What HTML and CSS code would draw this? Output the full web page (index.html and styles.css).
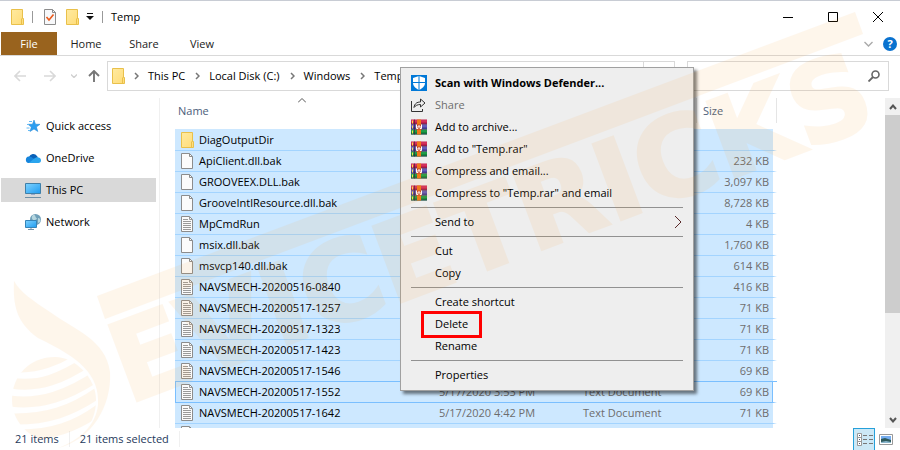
FILE: index.html
```
<!DOCTYPE html>
<html lang="en">
<head>
    <meta charset="UTF-8">
    <meta name="viewport" content="width=device-width, initial-scale=1.0">
    <title>Temp</title>
    <link rel="stylesheet" href="styles.css">
</head>
<body>

    <!-- Icons -->
    <svg class="defs" aria-hidden="true">
        <defs>
            <linearGradient id="folder-fill" x1="0" y1="0" x2="1" y2="1">
                <stop offset="0" stop-color="#ffeaa0"/>
                <stop offset="1" stop-color="#ffdc78"/>
            </linearGradient>
            <linearGradient id="screen-fill" x1="0" y1="0" x2="1" y2="1">
                <stop offset="0" stop-color="#7fd3ff"/>
                <stop offset="1" stop-color="#1e9bf0"/>
            </linearGradient>
        </defs>
        <symbol id="folder" viewBox="0 0 13 16">
            <path d="M.5.5h11v9h1v6H.5z" fill="url(#folder-fill)" stroke="#e9c04a"/>
            <path d="M10.5 15V10l1-1" fill="none" stroke="#e9c04a"/>
        </symbol>
        <symbol id="file" viewBox="0 0 12 16">
            <path d="M.5.5h8l3 3v12H.5z" fill="#fbfbfb" stroke="#8c8c8c"/>
            <path d="M8.5.5v3h3" fill="none" stroke="#8c8c8c"/>
        </symbol>
        <symbol id="text" viewBox="0 0 12 16">
            <path d="M.5.5h8l3 3v12H.5z" fill="#fbfbfb" stroke="#8c8c8c"/>
            <path d="M8.5.5v3h3M2 3.5h5M2 5.5h8M2 7.5h8M2 9.5h8M2 11.5h8M2 13.5h8" fill="none" stroke="#9a9a9a"/>
        </symbol>
        <symbol id="check" viewBox="0 0 12 16">
            <path d="M.5.5h8l3 3v12H.5z" fill="#f7f8fa" stroke="#8c8c8c"/>
            <path d="M8.5.5v3h3" fill="none" stroke="#8c8c8c"/>
            <path d="M2.5 8l2.5 3 4.500-5.500" fill="none" stroke="#ea5a1c" stroke-width="1.600"/>
        </symbol>
        <symbol id="chevron" viewBox="0 0 5 8">
            <path d="M1 1l3 3-3 3" fill="none" stroke="#777" stroke-width="1.500"/>
        </symbol>
        <symbol id="rar" viewBox="0 0 16 15">
            <path d="M0 0h16v5H0z" fill="#c41e4c"/>
            <path d="M0 1h16v1H0z" fill="#e0426a"/>
            <path d="M0 5h16v5H0z" fill="#4f46a8"/>
            <path d="M0 6h16v1H0z" fill="#7a70c8"/>
            <path d="M0 10h16v5H0z" fill="#128a3a"/>
            <path d="M0 11h16v1H0z" fill="#2fae57"/>
            <path d="M0 4.500h16M0 9.500h16M0 14.500h16" stroke="#33285a" stroke-width=".7"/>
            <path d="M1 1h1v3H1zM1 6h1v3H1zM1 11h1v3H1z" fill="#ffe14a"/>
            <path d="M3.500 0v15" stroke="#40203c" stroke-width=".7"/>
            <path d="M6 0h4v15H6z" fill="#f07818"/>
            <path d="M5 5h6v5H5z" fill="#c4442a"/>
            <path d="M5.500 5v4H7V6.500h2V9h1.500V5" fill="none" stroke="#fff"/>
        </symbol>
    </svg>

    <div class="window">
        <header class="titlebar">
            <svg class="folder"><use href="#folder"/></svg>
            <span class="divider"></span>
            <svg class="file"><use href="#check"/></svg>
            <svg class="folder"><use href="#folder"/></svg>
            <svg class="customize" viewBox="0 0 8 8"><path d="M1 .5h6" stroke="#111"/><path d="M0 3h8L4 7z" fill="#111"/></svg>
            <span class="divider"></span>
            <h1>Temp</h1>
            <div class="controls">
                <button aria-label="Minimize"><svg viewBox="0 0 10 10"><path d="M0 5.500h10" stroke="#000"/></svg></button>
                <button aria-label="Maximize"><svg viewBox="0 0 10 10"><path d="M.5.5h9v9h-9z" fill="none" stroke="#000"/></svg></button>
                <button aria-label="Close"><svg viewBox="0 0 10 10"><path d="M0 0l10 10M10 0L0 10" stroke="#000"/></svg></button>
            </div>
        </header>

        <nav class="tabs">
            <button class="active">File</button>
            <button>Home</button>
            <button>Share</button>
            <button>View</button>
            <div class="help">
                <svg class="expand" viewBox="0 0 9 6"><path d="M.5 1l4 4 4-4" fill="none" stroke="#aaa" stroke-width="1.400"/></svg>
                <button aria-label="Help">?</button>
            </div>
        </nav>

        <div class="toolbar">
            <div class="arrows">
                <svg class="arrow" viewBox="0 0 12 12"><path d="M12 6H1M6 1L1 6l5 5" fill="none" stroke="#d9d9d9" stroke-width="1.600"/></svg>
                <svg class="arrow" viewBox="0 0 12 12"><path d="M0 6h11M6 1l5 5-5 5" fill="none" stroke="#d9d9d9" stroke-width="1.600"/></svg>
                <svg class="recent" viewBox="0 0 6 4"><path d="M0 .5l3 3 3-3" fill="none" stroke="#d0d0d0" stroke-width="1.400"/></svg>
                <svg class="arrow" viewBox="0 0 12 12"><path d="M6 12V1M1 6l5-5 5 5" fill="none" stroke="#777" stroke-width="1.900"/></svg>
            </div>
            <div class="address">
                <svg class="folder"><use href="#folder"/></svg>
                <svg class="chevron"><use href="#chevron"/></svg>
                <a href="#">This PC</a>
                <svg class="chevron"><use href="#chevron"/></svg>
                <a href="#">Local Disk (C:)</a>
                <svg class="chevron"><use href="#chevron"/></svg>
                <a href="#">Windows</a>
                <svg class="chevron"><use href="#chevron"/></svg>
                <a href="#">Temp</a>
                <span class="refresh"></span>
            </div>
            <div class="search">
                <input type="text" aria-label="Search Temp">
                <svg viewBox="0 0 12 12"><circle cx="7.500" cy="4.500" r="3.500" fill="none" stroke="#666" stroke-width="1.600"/><path d="M5 7L.5 11.500" stroke="#666" stroke-width="1.800"/></svg>
            </div>
        </div>

        <main>
            <aside>
                <a href="#">
                    <svg viewBox="0 0 16 16"><path d="M9 2l1.500 4.200 4.500.1-3.600 2.700 1.400 4.500L9 11l-4 2.500 1.300-4.400L3 6.300l4.500-.1z" fill="#2b9df0" stroke="#1a82d2" stroke-width=".5"/><path d="M4 3.500h3M2 6.500h2M1.500 10h3M3 12.500h2" stroke="#66baf3"/></svg>
                    Quick access
                </a>
                <a href="#">
                    <svg viewBox="0 0 16 16"><path d="M4 7a4.500 4.500 0 0 1 8-1l1 1.500L5 11z" fill="#0a61b8"/><path d="M3.500 13a3.300 3.300 0 0 1 .2-6.500c2-.3 3 .9 4.500 1.800L14 12z" fill="#1685dc"/><path d="M4 13l4.500-4 3-1.800c2.500-.3 4.500 1 4.500 3A2.800 2.800 0 0 1 13 13z" fill="#2aa5ee"/></svg>
                    OneDrive
                </a>
                <a href="#" class="selected">
                    <svg viewBox="0 0 16 16"><path d="M.5 1.500h15v10H.5z" fill="url(#screen-fill)" stroke="#3f7fa8"/><path d="M6 12h4v1H6z" fill="#9ac"/><path d="M0 15.500h16" stroke="#6f8fa5"/></svg>
                    This PC
                </a>
                <a href="#">
                    <svg viewBox="0 0 16 16"><circle cx="10.500" cy="5.500" r="5.500" fill="#6f9fb9"/><path d="M8 1c3-.5 2 2 3.500 3S9 7 8 6s-2-3 0-5zM13 4c2 0 3 2 2 4l-2 1z" fill="#b5d6df"/><path d="M.5 6.500h11v7H.5z" fill="url(#screen-fill)" stroke="#3584b8"/><path d="M3 15.500h6M6 14v1" stroke="#7795aa"/></svg>
                    Network
                </a>
            </aside>

            <section class="files">
                <svg class="sort" viewBox="0 0 8 5"><path d="M0 4.500l4-4 4 4" fill="none" stroke="#555"/></svg>
                <table>
                    <thead>
                        <tr><th class="name">Name</th><th class="date"></th><th class="type"></th><th class="size">Size</th></tr>
                    </thead>
                    <tbody>
                        <tr><td><svg class="folder"><use href="#folder"/></svg>DiagOutputDir</td><td></td><td></td><td></td></tr>
                        <tr><td><svg class="file"><use href="#file"/></svg>ApiClient.dll.bak</td><td></td><td></td><td>232 KB</td></tr>
                        <tr><td><svg class="file"><use href="#file"/></svg>GROOVEEX.DLL.bak</td><td></td><td></td><td>3,097 KB</td></tr>
                        <tr><td><svg class="file"><use href="#file"/></svg>GrooveIntlResource.dll.bak</td><td></td><td></td><td>8,728 KB</td></tr>
                        <tr><td><svg class="file"><use href="#text"/></svg>MpCmdRun</td><td></td><td></td><td>4 KB</td></tr>
                        <tr><td><svg class="file"><use href="#file"/></svg>msix.dll.bak</td><td></td><td></td><td>1,760 KB</td></tr>
                        <tr><td><svg class="file"><use href="#file"/></svg>msvcp140.dll.bak</td><td></td><td></td><td>614 KB</td></tr>
                        <tr><td><svg class="file"><use href="#text"/></svg>NAVSMECH-20200516-0840</td><td></td><td></td><td>416 KB</td></tr>
                        <tr><td><svg class="file"><use href="#text"/></svg>NAVSMECH-20200517-1257</td><td></td><td></td><td>71 KB</td></tr>
                        <tr><td><svg class="file"><use href="#text"/></svg>NAVSMECH-20200517-1323</td><td></td><td></td><td>71 KB</td></tr>
                        <tr><td><svg class="file"><use href="#text"/></svg>NAVSMECH-20200517-1423</td><td></td><td></td><td>71 KB</td></tr>
                        <tr><td><svg class="file"><use href="#text"/></svg>NAVSMECH-20200517-1546</td><td></td><td></td><td>69 KB</td></tr>
                        <tr class="focused"><td><svg class="file"><use href="#text"/></svg>NAVSMECH-20200517-1552</td><td>5/17/2020 3:53 PM</td><td>Text Document</td><td>69 KB</td></tr>
                        <tr><td><svg class="file"><use href="#text"/></svg>NAVSMECH-20200517-1642</td><td>5/17/2020 4:42 PM</td><td>Text Document</td><td>71 KB</td></tr>
                        <tr><td><svg class="file"><use href="#text"/></svg></td><td></td><td></td><td></td></tr>
                    </tbody>
                </table>
            </section>

            <div class="scrollbar">
                <svg viewBox="0 0 8 6"><path d="M1 5l3-3.500L7 5" fill="none" stroke="#555" stroke-width="2"/></svg>
                <div class="thumb"></div>
                <svg viewBox="0 0 8 6"><path d="M1 1l3 3.500L7 1" fill="none" stroke="#555" stroke-width="2"/></svg>
            </div>
        </main>

        <footer>
            <span>21 items</span>
            <span>21 items selected</span>
            <div class="views">
                <button class="active" aria-label="Details">
                    <svg viewBox="0 0 16 13"><path d="M.5.5h4v12h-4zM.5 4.500h4M.5 8.500h4" fill="#fff" stroke="#999"/><path d="M2 2h1v1H2zM2 6h1v1H2zM2 10h1v1H2z" fill="#457"/><path d="M6 2.500h4M12 2.500h4M6 6.500h4M12 6.500h4M6 10.500h4M12 10.500h4" stroke="#777"/></svg>
                </button>
                <button aria-label="Large icons">
                    <svg viewBox="0 0 14 11"><path d="M.5.5h13v10H.5z" fill="#fff" stroke="#999"/><path d="M2 2h10v4H2z" fill="#76aef0"/><path d="M2 5l4-1 6 2v3H2z" fill="#2e5a5c"/><path d="M2 8l5-1 5 1v1H2z" fill="#89b5cc"/></svg>
                </button>
            </div>
        </footer>
    </div>

    <!-- Right click menu -->
    <ul class="menu">
        <li><button class="default"><svg viewBox="0 0 16 16"><path d="M0 0h16v16H0z" fill="#0078d7"/><path d="M8 1l6 2v5c0 3.500-3 5.500-6 7-3-1.500-6-3.500-6-7V3z" fill="#fff"/><path d="M8 1v14M2 7.500h12" stroke="#0078d7"/></svg>Scan with Windows Defender...</button></li>
        <li><button disabled><svg viewBox="0 0 16 16"><path d="M.5 4v10.500h11V12M3 10.500c.5-4 3-5.500 6.500-5.500V2L14 6l-4.500 4V7.500C6.500 7.500 4.500 8.500 3 10.500z" fill="none" stroke="#333"/></svg>Share</button></li>
        <li><button><svg><use href="#rar"/></svg>Add to archive...</button></li>
        <li><button><svg><use href="#rar"/></svg>Add to "Temp.rar"</button></li>
        <li><button><svg><use href="#rar"/></svg>Compress and email...</button></li>
        <li><button><svg><use href="#rar"/></svg>Compress to "Temp.rar" and email</button></li>
        <li class="separator"></li>
        <li><button>Send to<svg class="more" viewBox="0 0 8 14"><path d="M1 1l6 6-6 6" fill="none" stroke="#5a2a2a"/></svg></button></li>
        <li class="separator"></li>
        <li><button>Cut</button></li>
        <li><button>Copy</button></li>
        <li class="separator"></li>
        <li><button>Create shortcut</button></li>
        <li class="marked"><button>Delete</button></li>
        <li><button>Rename</button></li>
        <li class="separator"></li>
        <li><button>Properties</button></li>
    </ul>

    <!-- Watermark -->
    <svg class="watermark" viewBox="0 0 900 450" aria-hidden="true">
        <clipPath id="globe"><path d="M12 400C12 375 30 357 55 357C75 357 96 378 96 400C96 425 80 440 62 444C35 444 12 425 12 400z"/></clipPath>
        <path d="M97 296L855 12L863 34L105 319z"/>
        <text transform="translate(128 404) rotate(-20.500)">EVICETRICKS</text>
        <path d="M14 281C13 305 16 322 38 338C80 358 100 375 98 405C96 425 80 440 58 448C92 440 112 405 110 372C106 340 75 330 50 312C32 300 20 292 14 281z"/>
        <g clip-path="url(#globe)" fill="none" stroke-width="11">
            <path d="M10 366C35 370 60 360 80 345"/>
            <path d="M10 383C40 388 62 378 90 360"/>
            <path d="M10 401C40 405 68 396 100 374"/>
            <path d="M10 419C45 420 72 412 102 390"/>
            <path d="M20 435C50 435 76 428 104 406"/>
        </g>
    </svg>

</body>
</html>
```
FILE: styles.css
```
*, *::after {
    box-sizing: border-box;
}
body {
    margin: 0;
    font-family: 'Open Sans', 'Noto Sans', sans-serif;
    font-size: 11px;
    line-height: 16px;
    color: #000;
    background: #fff;
    overflow: hidden;
}
button, input {
    font: inherit;
    color: inherit;
    background: none;
    border: none;
    padding: 0;
}
a {
    color: inherit;
    text-decoration: none;
}
svg {
    display: block;
    flex: none;
}
.defs {
    position: absolute;
    width: 0;
    height: 0;
}
.folder {
    width: 13px;
    height: 16px;
}
.file {
    width: 12px;
    height: 16px;
}
.window {
    display: flex;
    flex-direction: column;
    height: 100vh;
    border-top: 1px solid #c8ccd4;
}

/* Title bar */
.titlebar {
    display: flex;
    align-items: center;
    height: 31px;
    padding-left: 11px;
}
.titlebar .divider {
    width: 1px;
    height: 12px;
    margin: 0 8px;
    background: #999;
}
.titlebar .divider + .file {
    margin: 0 10px 0 3px;
}
.customize {
    width: 8px;
    height: 8px;
    margin-left: 7px;
}
h1 {
    margin: 0;
    font-size: 11px;
    font-weight: normal;
}
.controls {
    display: flex;
    margin-left: auto;
}
.controls button {
    width: 45px;
    height: 30px;
    display: flex;
    align-items: center;
    justify-content: center;
}
.controls svg {
    width: 10px;
    height: 10px;
}

/* Ribbon tabs */
.tabs {
    display: flex;
    height: 24px;
    padding-left: 1px;
    border-bottom: 1px solid #d9d9d9;
    color: #222;
}
.tabs > button {
    width: 58px;
}
.tabs > .active {
    width: 56px;
    background: #99631e;
    color: #fff;
}
.help {
    display: flex;
    align-items: center;
    gap: 10px;
    margin-left: auto;
    padding-right: 3px;
}
.expand {
    width: 9px;
    height: 6px;
}
.help button {
    width: 14px;
    height: 14px;
    border-radius: 50%;
    background: #0a72cf;
    color: #fff;
    font-weight: bold;
    line-height: 14px;
}

/* Address bar */
.toolbar {
    display: flex;
    height: 42px;
    padding: 5px 11px 7px 14px;
}
.arrows {
    display: flex;
    align-items: center;
    width: 93px;
}
.arrow {
    width: 12px;
    height: 12px;
    margin-right: 18px;
}
.recent {
    width: 6px;
    height: 4px;
    margin: 0 11px 0 -3px;
}
.arrows .arrow:last-child {
    margin-right: 0;
}
.address, .search {
    display: flex;
    align-items: center;
    border: 1px solid #d9d9d9;
}
.address {
    flex: 1;
    padding-left: 4px;
}
.address .chevron {
    width: 5px;
    height: 8px;
    margin: 0 9px;
}
.address a + .chevron {
    margin-left: 10px;
}
.refresh {
    align-self: stretch;
    width: 31px;
    margin-left: auto;
    border-left: 1px solid #d9d9d9;
}
.search {
    width: 202px;
    margin-left: 12px;
    padding-right: 8px;
}
.search input {
    flex: 1;
    min-width: 0;
}
.search svg {
    width: 12px;
    height: 12px;
}

/* Sidebar */
main {
    display: flex;
    flex: 1;
    min-height: 0;
}
aside {
    display: flex;
    flex-direction: column;
    gap: 8px;
    width: 160px;
    padding: 16px 3px 0 1px;
    border-right: 1px solid #f0f0f0;
}
aside a {
    display: flex;
    align-items: center;
    gap: 5px;
    height: 24px;
    padding-left: 24px;
}
aside a svg {
    width: 16px;
    height: 16px;
}
aside .selected {
    background: #d9d9d9;
}

/* File list */
.files {
    position: relative;
    flex: 1;
    min-width: 0;
    padding-left: 15px;
    overflow: hidden;
}
.sort {
    position: absolute;
    left: 138px;
    top: 0;
    width: 8px;
    height: 5px;
}
table {
    width: 602px;
    table-layout: fixed;
    border-spacing: 0;
}
th {
    height: 31px;
    padding: 0 0 5px 6px;
    font-weight: normal;
    text-align: left;
    color: #4c607a;
    background: linear-gradient(#e5e5e5, #e5e5e5) no-repeat right top / 1px 25px;
}
th.name {
    width: 257px;
    padding-left: 3px;
}
th.date {
    width: 144px;
}
th.type {
    width: 121px;
}
td {
    height: 21px;
    padding: 0 7px;
    border-bottom: 1px solid #a3d4ff;
    background: #cde8ff;
    color: #6d6d6d;
    white-space: nowrap;
}
tbody tr:first-child td {
    height: 22px;
}
td:first-child {
    display: flex;
    align-items: center;
    gap: 6px;
    padding-left: 6px;
    color: #000;
}
td .folder {
    margin-right: -1px;
}
td:last-child {
    text-align: right;
    border-right: 4px solid #fff;
    padding-right: 4px;
}
.focused td {
    border-bottom-color: #7abfff;
    box-shadow: 0 -1px #7abfff;
}
.focused td:first-child {
    box-shadow: 0 -1px #7abfff, inset 1px 0 #7abfff;
}
.focused td:last-child {
    box-shadow: 0 -1px #7abfff, inset -1px 0 #7abfff;
}

/* Scrollbar */
.scrollbar {
    display: flex;
    flex-direction: column;
    align-items: center;
    width: 15px;
    background: #f0f0f0;
}
.scrollbar svg {
    width: 8px;
    height: 6px;
    margin: 6px 0 5px;
}
.scrollbar svg:last-child {
    margin-top: auto;
}
.thumb {
    width: 15px;
    height: 60%;
    background: #cdcdcd;
}

/* Status bar */
footer {
    display: flex;
    align-items: center;
    height: 22px;
    padding-left: 15px;
    color: #1e395b;
}
footer span {
    padding-right: 10px;
    margin-right: 10px;
    border-right: 1px solid #f0f0f0;
}
.views {
    display: flex;
    margin-left: auto;
    padding-right: 7px;
    gap: 4px;
}
.views button {
    height: 22px;
}
.views .active {
    width: 22px;
    padding-left: 3px;
    border: 1px solid #26a0da;
    border-bottom: none;
    background: #cce8f6;
}
.views svg {
    width: 14px;
    height: 11px;
}
.views .active svg {
    width: 16px;
    height: 13px;
}

/* Context menu */
.menu {
    position: absolute;
    left: 400px;
    top: 67px;
    width: 294px;
    margin: 0;
    padding: 4px 0;
    list-style: none;
    color: #000;
    background: #eee;
    border: 1px solid #a0a0a0;
    box-shadow: 3px 3px 3px rgba(0, 0, 0, 0.5);
}
.menu button {
    display: flex;
    align-items: center;
    width: 100%;
    height: 22px;
    padding-left: 34px;
    text-align: left;
}
.menu button svg {
    width: 16px;
    height: 16px;
    margin: 0 8px 0 -24px;
}
.menu button .more {
    width: 8px;
    height: 14px;
    margin: 0 11px 0 auto;
}
.menu button:disabled {
    color: #6d6d6d;
}
.menu .default {
    font-weight: bold;
}
.menu .separator {
    height: 1px;
    margin: 3px 10px;
    background: #919191;
}
.marked {
    position: relative;
}
.marked::after {
    content: "";
    position: absolute;
    left: 20px;
    top: -2px;
    width: 61px;
    height: 27px;
    border: 3px solid #f00;
}

/* Watermark lies over the whole window */
.watermark {
    position: absolute;
    left: 0;
    top: 0;
    width: 100%;
    fill: #faa032;
    stroke: none;
    opacity: 0.09;
    pointer-events: none;
}
.watermark g {
    stroke: #faa032;
}
.watermark text {
    font: bold 110px 'DejaVu Sans', sans-serif;
    font-kerning: none;
    stroke: #faa032;
    stroke-width: 3px;
}
```
